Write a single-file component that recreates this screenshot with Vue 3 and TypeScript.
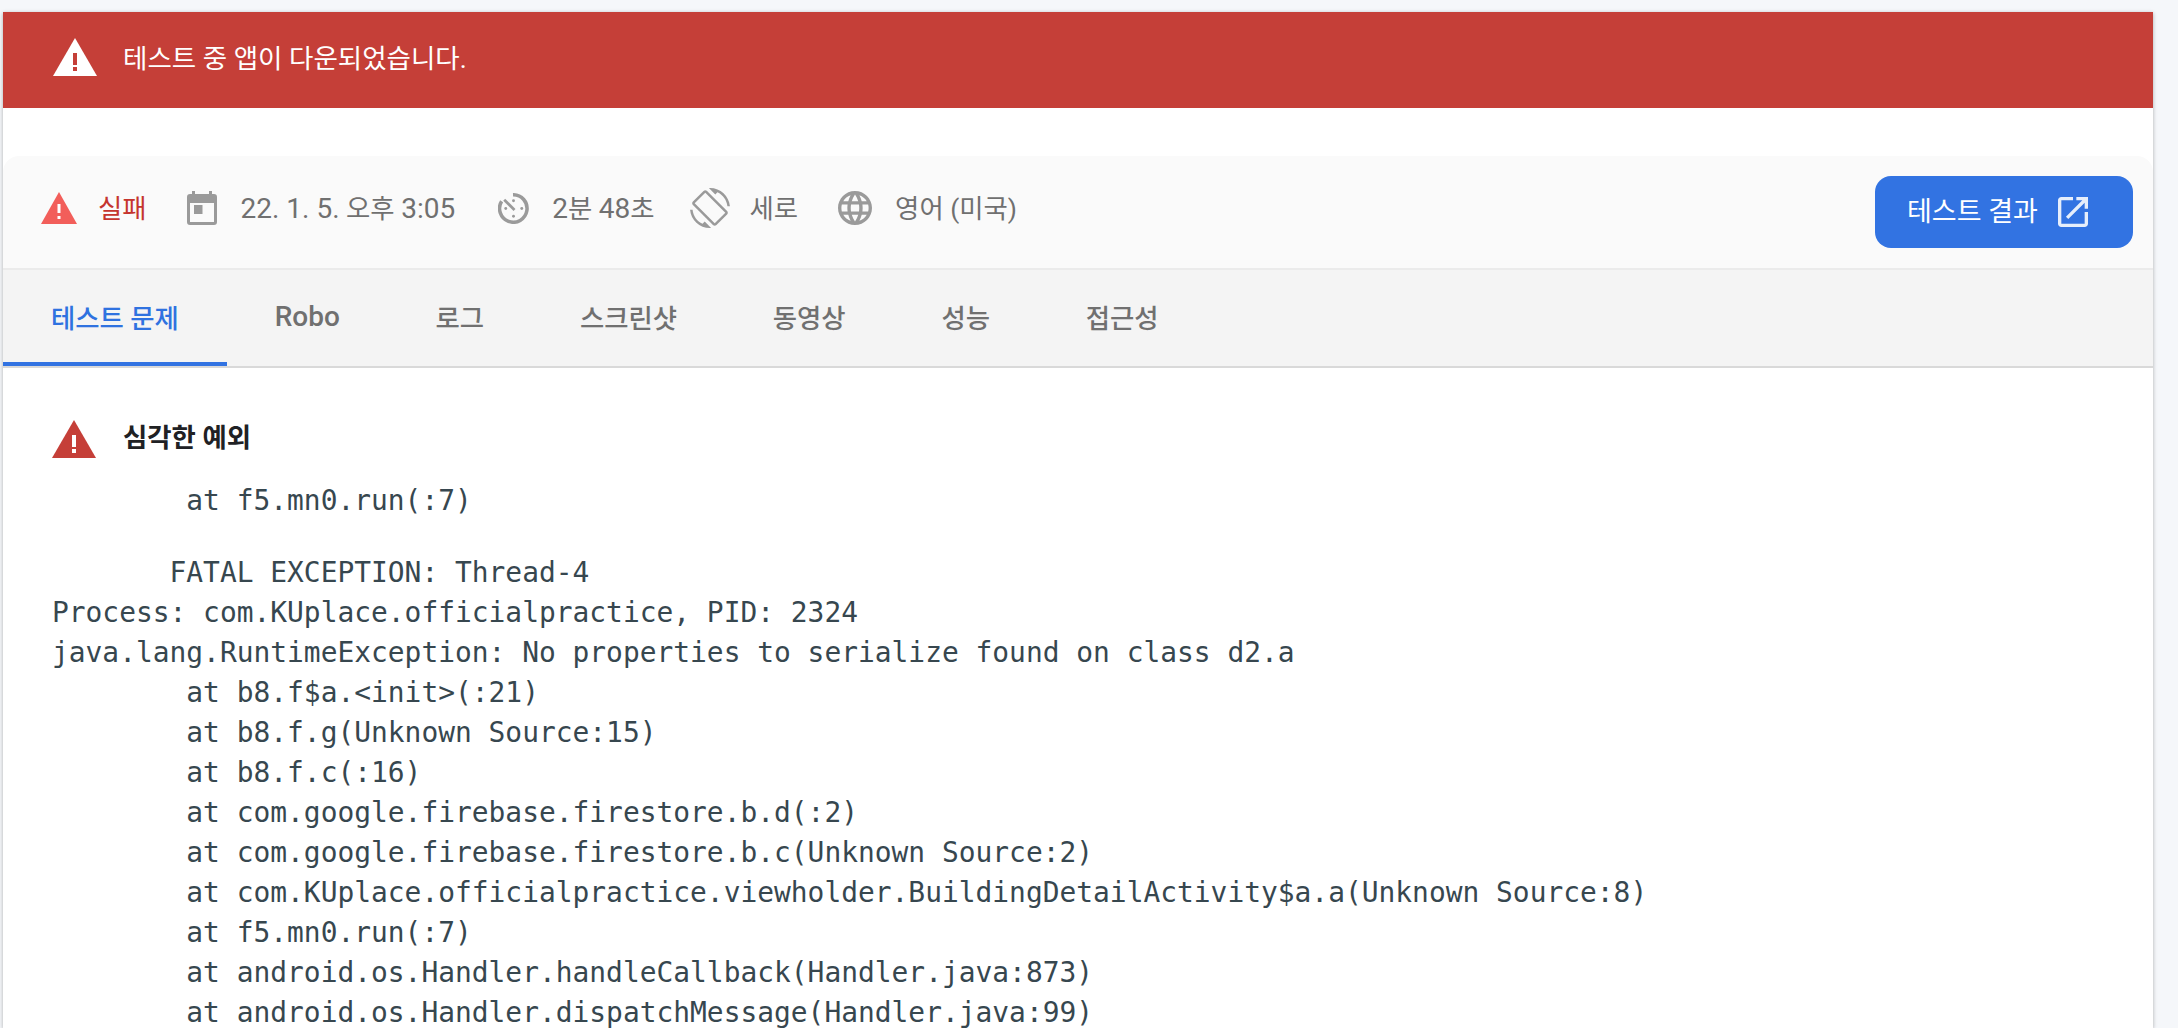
<script setup lang="ts">
const tabs: string[] = ['테스트 문제', 'Robo', '로그', '스크린샷', '동영상', '성능', '접근성']
const logHead: string = '        at f5.mn0.run(:7)'
const logBody: string = `       FATAL EXCEPTION: Thread-4
Process: com.KUplace.officialpractice, PID: 2324
java.lang.RuntimeException: No properties to serialize found on class d2.a
        at b8.f$a.<init>(:21)
        at b8.f.g(Unknown Source:15)
        at b8.f.c(:16)
        at com.google.firebase.firestore.b.d(:2)
        at com.google.firebase.firestore.b.c(Unknown Source:2)
        at com.KUplace.officialpractice.viewholder.BuildingDetailActivity$a.a(Unknown Source:8)
        at f5.mn0.run(:7)
        at android.os.Handler.handleCallback(Handler.java:873)
        at android.os.Handler.dispatchMessage(Handler.java:99)`
</script>

<template>
  <div class="page">
    <main class="card">
      <header class="banner">
        <svg class="warn-lg" viewBox="0 0 44 38"><path fill="#fff" d="M0 38 22 0l22 38z" /><path fill="#c53f38" d="M20 15h4v12h-4zM20 29h4v4h-4z" /></svg>
        <span>테스트 중 앱이 다운되었습니다.</span>
      </header>
      <section class="details">
        <div class="summary">
          <div class="meta fail">
            <svg class="i-warn" viewBox="0 0 36 32"><path fill="#f25e5a" d="M0 32 18 0l18 32z" /><path fill="#fff" d="M16.500 12h3v9h-3zM16.500 24h3v3h-3z" /></svg>
            <span>실패</span>
          </div>
          <div class="meta date">
            <svg class="i-cal" viewBox="0 0 30 34"><path fill="#9a9a9a" d="M5 0h3v3h14V0h3v3h2a3 3 0 0 1 3 3v25a3 3 0 0 1-3 3H3a3 3 0 0 1-3-3V6a3 3 0 0 1 3-3h2z" /><path fill="#fafafa" d="M3 12h24v19H3z" /><path fill="#9a9a9a" d="M7 14h8.500v9H7z" /></svg>
            <span><span class="num">22. 1. 5.</span> 오후 <span class="num">3:05</span></span>
          </div>
          <div class="meta">
            <svg class="i-time" viewBox="0 0 30 30"><path fill="none" stroke="#9a9a9a" stroke-width="3.400" stroke-linecap="butt" d="M14.500 1.700A13.300 13.300 0 1 1 3.500 8" /><path fill="none" stroke="#9a9a9a" stroke-width="2.600" d="m6 6.500 10 10" /><circle cx="15" cy="7.500" r="1.400" fill="#9a9a9a" /><circle cx="23" cy="15" r="1.400" fill="#9a9a9a" /><circle cx="15" cy="22.500" r="1.400" fill="#9a9a9a" /><circle cx="7.500" cy="15" r="1.400" fill="#9a9a9a" /></svg>
            <span><span class="num">2</span>분 <span class="num">48</span>초</span>
          </div>
          <div class="meta rot">
            <svg class="i-rot" viewBox="0 0 24 24"><path fill="#9a9a9a" d="M16.480 2.520c3.270 1.550 5.610 4.720 5.970 8.480h1.500C23.440 4.840 18.290 0 12 0l-.66.03 3.810 3.810 1.330-1.320zm-6.250-.77c-.59-.59-1.540-.59-2.120 0L1.750 8.110c-.59.59-.59 1.540 0 2.120l12.020 12.020c.59.59 1.540.59 2.120 0l6.360-6.360c.59-.59.59-1.540 0-2.120L10.230 1.750zm4.600 19.440L2.810 9.170l6.360-6.360 12.020 12.020-6.360 6.360zm-7.310.29C4.250 19.940 1.910 16.760 1.550 13H.05C.56 19.160 5.710 24 12 24l.66-.03-3.810-3.810-1.330 1.320z" /></svg>
            <span>세로</span>
          </div>
          <div class="meta">
            <svg class="i-globe" viewBox="2 2 20 20"><path fill="#9a9a9a" d="M11.990 2C6.470 2 2 6.480 2 12s4.470 10 9.990 10C17.520 22 22 17.520 22 12S17.520 2 11.990 2zm6.930 6h-2.950c-.32-1.250-.78-2.450-1.380-3.560 1.840.63 3.370 1.910 4.330 3.560zM12 4.040c.83 1.200 1.480 2.530 1.910 3.960h-3.820c.43-1.430 1.080-2.760 1.910-3.960zM4.260 14C4.100 13.360 4 12.690 4 12s.1-1.360.26-2h3.380c-.08.66-.14 1.320-.14 2 0 .68.06 1.340.14 2H4.260zm.82 2h2.950c.32 1.250.78 2.450 1.380 3.560-1.840-.63-3.370-1.900-4.330-3.560zm2.950-8H5.080c.96-1.660 2.490-2.930 4.330-3.560C8.810 5.550 8.350 6.750 8.030 8zM12 19.960c-.83-1.200-1.480-2.530-1.910-3.960h3.820c-.43 1.430-1.080 2.760-1.910 3.960zM14.340 14H9.660c-.09-.66-.16-1.320-.16-2 0-.68.07-1.350.16-2h4.680c.09.65.16 1.320.16 2 0 .68-.07 1.340-.16 2zm.25 5.560c.6-1.110 1.060-2.310 1.380-3.560h2.950c-.96 1.650-2.490 2.930-4.330 3.560zM16.360 14c.08-.66.14-1.320.14-2 0-.68-.06-1.340-.14-2h3.380c.16.64.26 1.310.26 2s-.1 1.360-.26 2h-3.380z" /></svg>
            <span>영어 (미국)</span>
          </div>
          <button class="result" type="button">
            <span class="result-label">테스트 결과</span>
            <svg viewBox="3 3 18 18"><path fill="#e6eefb" d="M19 19H5V5h7V3H5c-1.110 0-2 .9-2 2v14c0 1.100.89 2 2 2h14c1.100 0 2-.9 2-2v-7h-2v7zM14 3v2h3.590l-9.830 9.830 1.410 1.410L19 6.410V10h2V3h-7z" /></svg>
          </button>
        </div>
        <nav class="tabs">
          <span v-for="(t, i) in tabs" :key="t" class="tab" :class="{ active: i === 0, latin: t === 'Robo' }">{{ t }}</span>
        </nav>
      </section>
      <section class="issue">
        <div class="issue-title">
          <svg class="warn-lg" viewBox="0 0 44 38"><path fill="#c53f38" d="M0 38 22 0l22 38z" /><path fill="#fff" d="M20 15h4v12h-4zM20 29h4v4h-4z" /></svg>
          <strong>심각한 예외</strong>
        </div>
        <pre class="log head">{{ logHead }}</pre>
        <pre class="log body">{{ logBody }}</pre>
      </section>
    </main>
  </div>
</template>

<style>
html, body { margin: 0; height: 100%; overflow: hidden; background: #f5f7fa; }
</style>

<style scoped>
.page {
  height: 1028px;
  overflow: hidden;
  padding: 12px 25px 0 3px;
  font-family: Roboto, "Noto Sans CJK KR", sans-serif;
}
.card {
  height: 1016px;
  overflow: hidden;
  background: #fff;
  box-shadow: 0 1px 4px rgba(0, 0, 0, .3);
}
.banner {
  height: 96px;
  box-sizing: border-box;
  display: flex;
  align-items: center;
  gap: 26px;
  padding: 0 0 6px 50px;
  background: #c53f38;
  color: #fff;
  font-size: 26.5px;
}
.banner span { margin-top: -2px; }
.warn-lg { width: 44px; height: 38px; flex: none; }
.details { margin-top: 48px; border-radius: 16px 16px 0 0; background: #fafafa; }
.summary {
  height: 112px;
  display: flex;
  align-items: center;
  padding: 0 20px 0 38px;
  color: #707070;
  font-size: 26.4px;
  border-bottom: 2px solid #ebebeb;
  box-sizing: content-box;
}
.num { font-size: 28px; }
.meta { display: flex; align-items: center; gap: 23px; margin: 0 40px 8px 0; white-space: nowrap; line-height: 36px; }
.meta > span { margin-top: 1px; }
.meta.date { gap: 24px; margin-right: 43px; }
.meta.rot { gap: 20px; margin-left: -5px; }
.fail { color: #c5352e; gap: 21px; }
.i-warn { width: 36px; height: 32px; }
.i-cal { width: 30px; height: 34px; }
.i-time { width: 31px; height: 31px; }
.i-rot { width: 40px; height: 40px; }
.i-globe { width: 34px; height: 34px; }
.result {
  margin-left: auto;
  width: 258px;
  height: 72px;
  display: flex;
  align-items: center;
  gap: 21px;
  padding: 0 0 0 32px;
  border: 0;
  border-radius: 16px;
  background: #3273e2;
  color: #fff;
  font: inherit;
  font-size: 27px;
}
.result-label { margin-top: -5px; }
.result svg { width: 30px; height: 30px; margin-left: -1px; margin-top: -1px; }
.tabs {
  height: 98px;
  display: flex;
  background: #f4f4f4;
  border-bottom: 2px solid #d9d9d9;
  box-sizing: border-box;
  color: #707070;
  font-size: 26.4px;
  font-weight: 500;
}
.tab { display: flex; align-items: center; padding: 0 47.900px 4px; }
.tab.latin { font-size: 28px; }
.tab.active { color: #2f72e0; box-shadow: inset 0 -4px 0 #3273e2; }
.issue { padding: 52px 0 0 49px; }
.issue-title { display: flex; align-items: center; gap: 27px; font-size: 26.4px; color: #202124; }
.issue-title strong { margin-top: -8px; font-weight: 700; }
.log {
  margin: 0;
  font-family: "DejaVu Sans Mono", monospace;
  font-size: 27.9px;
  line-height: 40px;
  color: #37474f;
}
.head { margin-top: 23px; }
.body { margin-top: 32px; }
</style>
